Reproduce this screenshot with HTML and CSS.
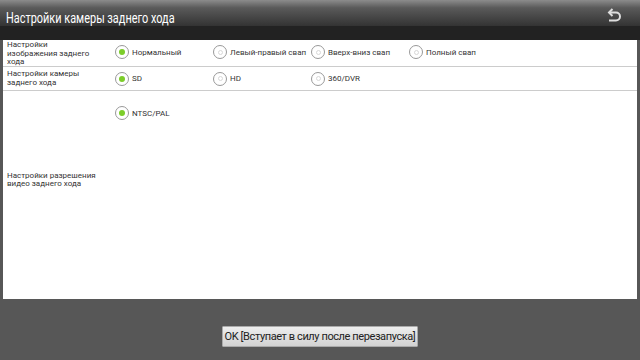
FILE: index.html
```html
<!DOCTYPE html>
<html lang="ru">
<head>
    <meta charset="UTF-8">
    <title>Настройки камеры заднего хода</title>
    <link rel="stylesheet" href="styles.css">
</head>
<body>

    <div class="titlebar">
        <div class="title">Настройки камеры заднего хода</div>
        <svg class="back" width="16" height="16" viewBox="0 0 16 16">
            <path d="M3 4.5 H10 A4 4 0 0 1 10 12.5 H3" fill="none" stroke="#ddd" stroke-width="2"/>
            <path d="M6.5 1 L3 4.5 L6.5 8" fill="none" stroke="#ddd" stroke-width="2"/>
        </svg>
    </div>
    <div class="subbar"></div>

    <div class="panel">
        <div class="row row-mode">
            <div class="label"><span>Настройки<br>изображения заднего<br>хода</span></div>
            <div class="options">
                <div class="opt"><span class="radio checked"></span>Нормальный</div>
                <div class="opt"><span class="radio"></span>Левый-правый свап</div>
                <div class="opt"><span class="radio"></span>Вверх-вниз свап</div>
                <div class="opt"><span class="radio"></span>Полный свап</div>
            </div>
        </div>
        <div class="row row-cam">
            <div class="label"><span>Настройки камеры<br>заднего хода</span></div>
            <div class="options">
                <div class="opt"><span class="radio checked"></span>SD</div>
                <div class="opt"><span class="radio"></span>HD</div>
                <div class="opt"><span class="radio"></span>360/DVR</div>
            </div>
        </div>
        <div class="row row-res">
            <div class="label"><span>Настройки разрешения<br>видео заднего хода</span></div>
            <div class="options">
                <div class="opt"><span class="radio checked"></span>NTSC/PAL</div>
            </div>
        </div>
    </div>

    <div class="footer">
        <button class="ok">OK [Вступает в силу после перезапуска]</button>
    </div>

</body>
</html>
```

FILE: styles.css
```css
body {
    margin: 0;
    width: 640px;
    height: 360px;
    overflow: hidden;
    background: #575757;
    font-family: Roboto, "Liberation Sans", sans-serif;
}
.titlebar {
    height: 26px;
    display: flex;
    align-items: center;
    justify-content: space-between;
    padding: 0 18px 0 6px;
    background: linear-gradient(#8c8c8c, #5a5a5a 30%, #333 100%);
}
.title {
    color: #fff;
    font-size: 14px;
    white-space: nowrap;
    padding-top: 9px;
    transform: scaleX(0.78);
    transform-origin: left center;
}
.back {
    margin-top: 6px;
}
.subbar {
    height: 14px;
    background: #222;
}
.panel {
    margin: 0 3px;
    height: 259px;
    background: #fff;
    display: flex;
    flex-direction: column;
}
.row {
    display: flex;
    border-bottom: 1px solid #ccc;
}
.row-mode {
    height: 26px;
}
.row-cam {
    height: 23px;
}
.row-res {
    flex: 1;
    border-bottom: none;
}
.label {
    width: 104px;
    padding-left: 4px;
    font-size: 8px;
    line-height: 8.5px;
    color: #333;
    white-space: nowrap;
    display: flex;
    align-items: center;
}
.row-mode .label {
    align-items: flex-start;
    padding-top: 1px;
}
.row-res .label {
    padding-bottom: 30px;
}
.options {
    display: flex;
    align-items: center;
    padding-left: 4px;
}
.row-mode .options {
    padding-bottom: 2px;
}
.row-res .options {
    align-items: flex-start;
    padding-top: 15px;
}
.opt {
    width: 98px;
    display: flex;
    align-items: center;
    font-size: 8px;
    color: #333;
    white-space: nowrap;
}
.radio {
    width: 12px;
    height: 12px;
    border: 1px solid #999;
    border-radius: 50%;
    margin-right: 3px;
    display: flex;
    align-items: center;
    justify-content: center;
}
.radio::after {
    content: "";
    width: 3px;
    height: 3px;
    border: 1px solid #d8d8d8;
    border-radius: 50%;
}
.radio.checked::after {
    width: 6px;
    height: 6px;
    border: none;
    background: #7ccd2a;
}
.footer {
    display: flex;
    justify-content: center;
    padding-top: 27px;
}
.ok {
    width: 196px;
    height: 21px;
    padding: 0;
    font-family: Roboto, "Liberation Sans", sans-serif;
    font-size: 11px;
    letter-spacing: -0.4px;
    color: #222;
    background: linear-gradient(#eee, #d2d2d2);
    border: 1px solid #aaa;
    border-radius: 1px;
}
```
